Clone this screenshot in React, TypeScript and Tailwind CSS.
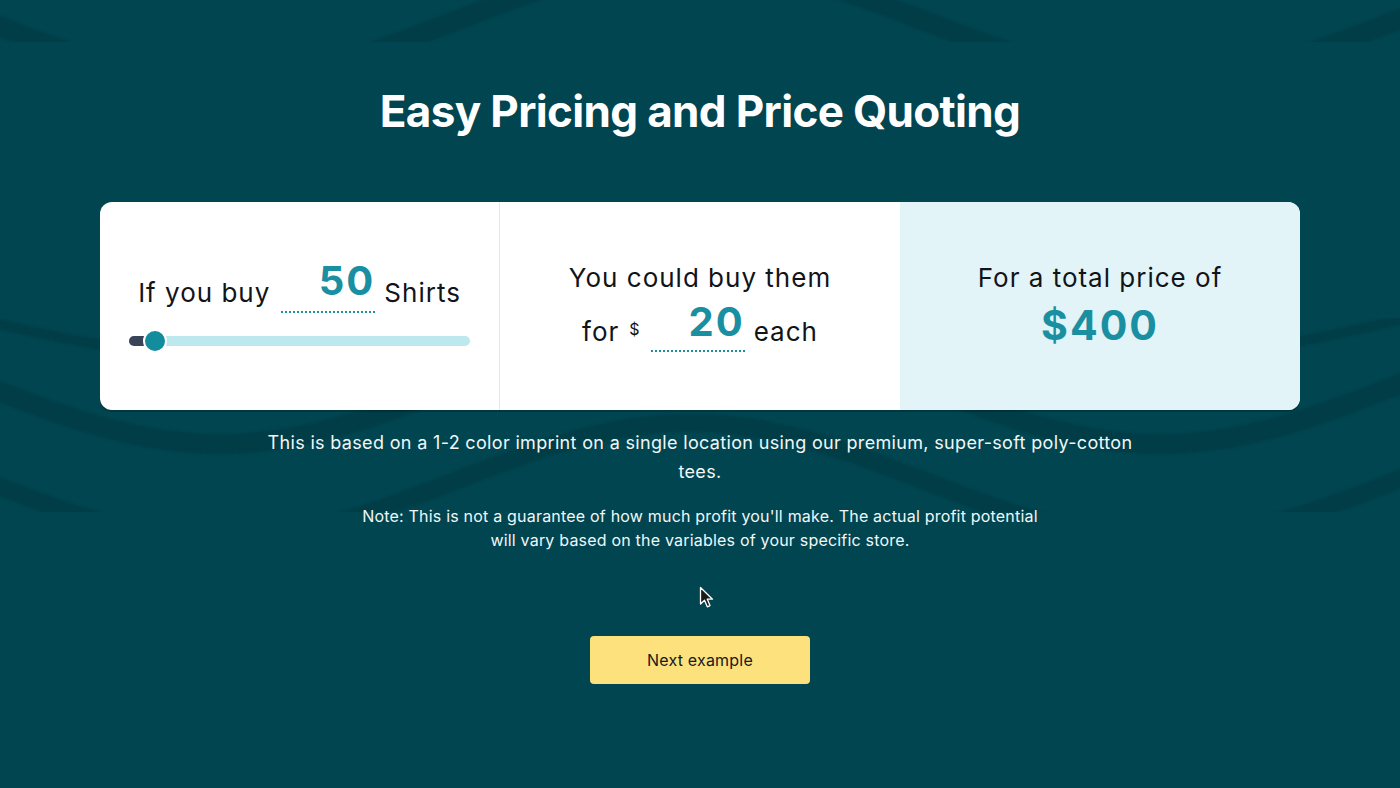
import React from "react";

function wavePath(offset: number, amp: number, period = 940, trough = 220): string {
  const pts: string[] = [];
  for (let x = -20; x <= 1420; x += 10) {
    const y = offset + 21 + amp * Math.cos((2 * Math.PI * (x - trough)) / period);
    pts.push(`${x === -20 ? "M" : "L"}${x} ${y.toFixed(1)}`);
  }
  return pts.join(" ");
}

function Waves() {
  return (
    <svg className="absolute inset-0 h-full w-full" viewBox="0 0 1400 788" preserveAspectRatio="none">
      <defs>
        <clipPath id="topclip">
          <rect x="0" y="0" width="1400" height="42" />
        </clipPath>
        <clipPath id="midclip">
          <rect x="0" y="318" width="1400" height="194" />
        </clipPath>
        <filter id="soft">
          <feGaussianBlur stdDeviation="1.2" />
        </filter>
      </defs>
      <g clipPath="url(#topclip)" filter="url(#soft)">
        <path d={wavePath(0, 58)} fill="none" stroke="#003c46" strokeWidth="20" />
      </g>
      <g clipPath="url(#midclip)" filter="url(#soft)">
        <path d={wavePath(300, 34)} fill="none" stroke="#003c46" strokeWidth="10" />
        <path d={wavePath(365, 58)} fill="none" stroke="#003c46" strokeWidth="20" />
        <path d={wavePath(460, 58)} fill="none" stroke="#003c46" strokeWidth="18" />
      </g>
    </svg>
  );
}

function Cursor() {
  return (
    <svg className="absolute left-[699px] top-[586px]" width="16" height="24" viewBox="0 0 16 24">
      <path d="M1.5 1.5 L1.5 18 L5.5 14.2 L8.3 20.8 L11 19.6 L8.3 13.2 L13.5 13.2 Z" fill="#1b1b1b" stroke="#ffffff" strokeWidth="1.3" strokeLinejoin="round" />
    </svg>
  );
}

export default function App() {
  return (
    <div className="relative h-[788px] w-full overflow-hidden bg-[#004550] font-['Inter',sans-serif]">
      <Waves />
      <div className="relative flex flex-col items-center pt-[84px]">
        <h1 className="text-[44px] font-bold leading-[54px] tracking-[-0.65px] text-white">
          Easy Pricing and Price Quoting
        </h1>

        <div className="mt-[64px] grid h-[208px] w-[1200px] grid-cols-3 overflow-hidden rounded-[12px] bg-white shadow-[0_2px_0_rgba(0,30,36,0.35)]">
          {/* Column 1 */}
          <div className="flex flex-col items-center justify-center border-r border-[#e6e9ec] pt-[1px]">
            <div className="flex items-end text-[#111418]">
              <span className="pb-[7px] text-[26px] leading-none tracking-[1px]">If you buy</span>
              <div className="ml-[11px] w-[94px] border-b-2 border-dotted border-[#1b8fa2] pb-[10px] text-right text-[40px] font-bold leading-none tracking-[2px] text-[#1b8fa2]">
                50
              </div>
              <span className="ml-[9px] pb-[7px] text-[26px] leading-none tracking-[1px]">Shirts</span>
            </div>
            <div className="relative mt-[17px] flex h-[22px] w-[341px] items-center">
              <div className="h-[10px] w-full rounded-full bg-[#bde8ee]" />
              <div className="absolute left-0 top-[6px] h-[10px] w-[26px] rounded-full bg-[#3a4458]" />
              <div className="absolute left-[14px] top-0 h-[24px] w-[24px] -translate-y-[1px] rounded-full border-2 border-white bg-[#138c9e]" />
            </div>
          </div>

          {/* Column 2 */}
          <div className="flex flex-col items-center justify-center pt-[4px]">
            <div className="text-[26px] leading-none tracking-[1px] text-[#111418]">You could buy them</div>
            <div className="mt-[11px] flex items-end text-[#111418]">
              <span className="pb-[7px] text-[26px] leading-none tracking-[1px]">for</span>
              <span className="ml-[10px] pb-[15px] text-[16px] leading-none">$</span>
              <div className="ml-[11px] w-[94px] border-b-2 border-dotted border-[#1b8fa2] pb-[8px] text-right text-[40px] font-bold leading-none tracking-[2px] text-[#1b8fa2]">
                20
              </div>
              <span className="ml-[9px] pb-[7px] text-[26px] leading-none tracking-[1px]">each</span>
            </div>
          </div>

          {/* Column 3 */}
          <div className="flex flex-col items-center justify-center bg-[#e2f4f7] pb-[2px]">
            <div className="text-[26px] leading-none tracking-[1px] text-[#111418]">For a total price of</div>
            <div className="mt-[14px] text-[41px] font-bold leading-none tracking-[2px] text-[#1b8fa2]">$400</div>
          </div>
        </div>

        <p className="mt-[18px] max-w-[880px] text-center text-[18px] leading-[29px] tracking-[0.33px] text-[#f2f7f8]">
          This is based on a 1-2 color imprint on a single location using our premium, super-soft poly-cotton tees.
        </p>
        <p className="mt-[18px] max-w-[690px] text-center text-[16px] leading-[24px] tracking-[0.2px] text-[#f2f7f8]">
          Note: This is not a guarantee of how much profit you'll make. The actual profit potential will vary based on the variables of your specific store.
        </p>

        <button className="mt-[84px] flex h-[48px] w-[220px] items-center justify-center rounded-[4px] bg-[#fde17c] text-[16px] tracking-[0.2px] text-[#15191e]">
          Next example
        </button>
      </div>
      <Cursor />
    </div>
  );
}
